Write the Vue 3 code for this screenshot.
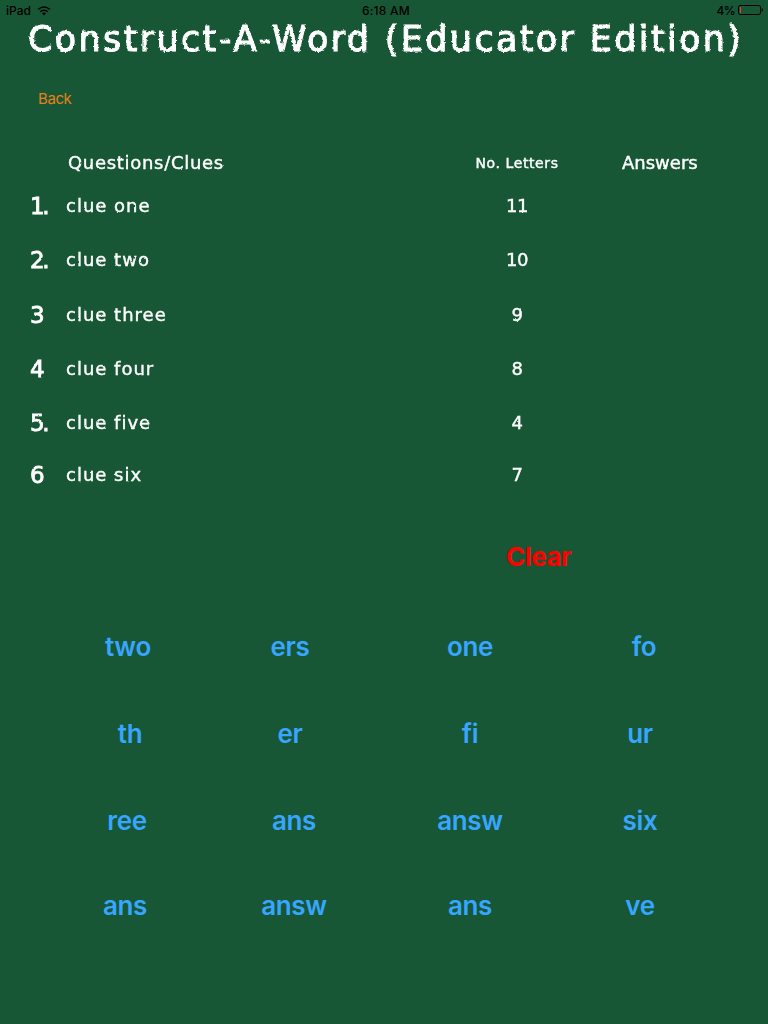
<script setup>
const clues = [
  { number: '1.', text: 'clue one', letters: '11' },
  { number: '2.', text: 'clue two', letters: '10' },
  { number: '3', text: 'clue three', letters: '9' },
  { number: '4', text: 'clue four', letters: '8' },
  { number: '5.', text: 'clue five', letters: '4' },
  { number: '6', text: 'clue six', letters: '7' },
]

// shift: how far a label sits from the centre of its column
const fragments = [
  [{ text: 'two' }, { text: 'ers', shift: -2 }, { text: 'one' }, { text: 'fo', shift: 2 }],
  [{ text: 'th', shift: 2 }, { text: 'er', shift: -2 }, { text: 'fi' }, { text: 'ur', shift: -2 }],
  [{ text: 'ree', shift: -1 }, { text: 'ans', shift: 2 }, { text: 'answ' }, { text: 'six', shift: -2 }],
  [{ text: 'ans', shift: -3 }, { text: 'answ', shift: 2 }, { text: 'ans' }, { text: 've', shift: -2 }],
]
</script>

<template>
  <main class="board">
    <!-- Rough edges for the chalk lettering -->
    <svg class="filters" aria-hidden="true">
      <filter id="chalk-large" x="-2%" y="-10%" width="104%" height="120%">
        <feTurbulence type="fractalNoise" baseFrequency="0.4" numOctaves="2" seed="4" result="noise" />
        <feDisplacementMap in="SourceGraphic" in2="noise" scale="2.8" xChannelSelector="R" yChannelSelector="G" />
      </filter>
      <filter id="chalk-small" x="-2%" y="-10%" width="104%" height="120%">
        <feTurbulence type="fractalNoise" baseFrequency="0.3" numOctaves="2" seed="5" result="noise" />
        <feDisplacementMap in="SourceGraphic" in2="noise" scale="1.7" xChannelSelector="R" yChannelSelector="G" />
      </filter>
    </svg>

    <header class="status">
      <div class="device">
        <span>iPad</span>
        <svg width="14" height="10" viewBox="0 0 14 10" fill="none" stroke="#000" stroke-width="1.5">
          <path d="M1 3.5Q7 -1.5 13 3.5" />
          <path d="M3.3 5.7Q7 2.7 10.7 5.7" />
          <path d="M5 7.2Q7 5.8 9 7.2L7 9.4Z" fill="#000" stroke="none" />
        </svg>
      </div>
      <span class="time">6:18 AM</span>
      <div class="power">
        <span class="percent">4%</span>
        <svg width="25" height="11" viewBox="0 0 25 11">
          <rect x="0.5" y="0.5" width="22" height="9" rx="1.7" fill="none" stroke="#000" />
          <path d="M23.7 3q1.2 .3 1.2 2t-1.2 2z" fill="#000" />
          <rect x="2" y="2" width="1" height="6" fill="#ff3824" />
        </svg>
      </div>
    </header>

    <h1 class="title chalk">Construct-A-Word (Educator Edition)</h1>
    <button class="back">Back</button>

    <section class="clues chalk">
      <div class="row head">
        <span class="question">Questions/Clues</span>
        <span class="letters">No. Letters</span>
        <span class="answer">Answers</span>
      </div>
      <div v-for="clue in clues" :key="clue.number" class="row">
        <span class="number">{{ clue.number }}</span>
        <span class="question">{{ clue.text }}</span>
        <span class="letters">{{ clue.letters }}</span>
      </div>
    </section>

    <button class="clear">Clear</button>

    <section class="words">
      <div v-for="(line, i) in fragments" :key="i" class="line">
        <button
          v-for="(word, j) in line"
          :key="j"
          :style="{ transform: `translateX(${word.shift || 0}px)` }"
        >{{ word.text }}</button>
      </div>
    </section>
  </main>
</template>

<style>
body {
  background: #175735;
}
</style>

<style scoped>
.board {
  width: 768px;
  height: 1024px;
  overflow: hidden;
  background: #175735;
  font-family: Inter, "Liberation Sans", sans-serif;
}
.filters {
  position: absolute;
  width: 0;
  height: 0;
}
button {
  padding: 0;
  border: 0;
  background: none;
  font-family: inherit;
}
.status {
  display: grid;
  grid-template-columns: 1fr auto 1fr;
  align-items: center;
  height: 20px;
  padding: 1px 5px 0 6px;
  box-sizing: border-box;
  color: #000;
  font-size: 12px;
  font-weight: 500;
}
.device,
.power {
  display: flex;
  align-items: center;
}
.device {
  gap: 6px;
}
.power {
  justify-content: flex-end;
  gap: 3px;
}
.percent {
  letter-spacing: -0.6px;
}
.time {
  padding-left: 3px;
  letter-spacing: 0.25px;
}
.chalk {
  color: #fff;
  font-family: "DejaVu Sans", sans-serif;
  -webkit-text-stroke: 0.4px #fff;
  filter: url(#chalk-small);
}
.title {
  height: 44px;
  margin: 0 0 0 28px;
  font-size: 35px;
  font-weight: 400;
  line-height: 39px;
  letter-spacing: 2.35px;
  white-space: nowrap;
  -webkit-text-stroke: 1px #fff;
  filter: url(#chalk-large);
}
.back {
  display: block;
  height: 20px;
  margin: 25px 0 0 38px;
  color: #e48119;
  font-size: 15px;
  line-height: 20px;
  letter-spacing: -0.4px;
}
.clues {
  display: grid;
  grid-template-rows: 43px 54px 55px 54px 54px 52px 54px;
  margin-top: 42px;
}
.row {
  display: grid;
  grid-template-columns: 36px 411px 80px 1fr;
  padding-left: 30px;
  font-size: 18px;
  line-height: 24px;
  letter-spacing: 1px;
  white-space: nowrap;
}
.number {
  font-size: 23px;
  letter-spacing: -2.5px;
  -webkit-text-stroke: 0.8px #fff;
}
.row .letters {
  text-align: center;
  letter-spacing: -0.5px;
}
.head .question {
  grid-column: 2;
  padding-left: 2px;
  letter-spacing: 0.7px;
}
.head .letters {
  margin: 0 -5px;
  font-size: 14px;
  letter-spacing: 0.6px;
}
.head .answer {
  padding-left: 65px;
  letter-spacing: 0;
}
.clear {
  display: block;
  height: 32px;
  margin: 24px 0 0 506px;
  color: #f00;
  font-size: 26px;
  font-weight: 700;
  line-height: 32px;
  letter-spacing: -0.5px;
}
.words {
  display: grid;
  grid-template-rows: 87px 87px 85px 85px;
  margin-top: 58px;
}
.line {
  display: grid;
  grid-template-columns: 164px 164px 192px 152px;
  align-items: start;
  padding-left: 46px;
}
.line button {
  height: 32px;
  color: #38a5fe;
  font-size: 26px;
  font-weight: 600;
  line-height: 32px;
  letter-spacing: -0.3px;
}
</style>
